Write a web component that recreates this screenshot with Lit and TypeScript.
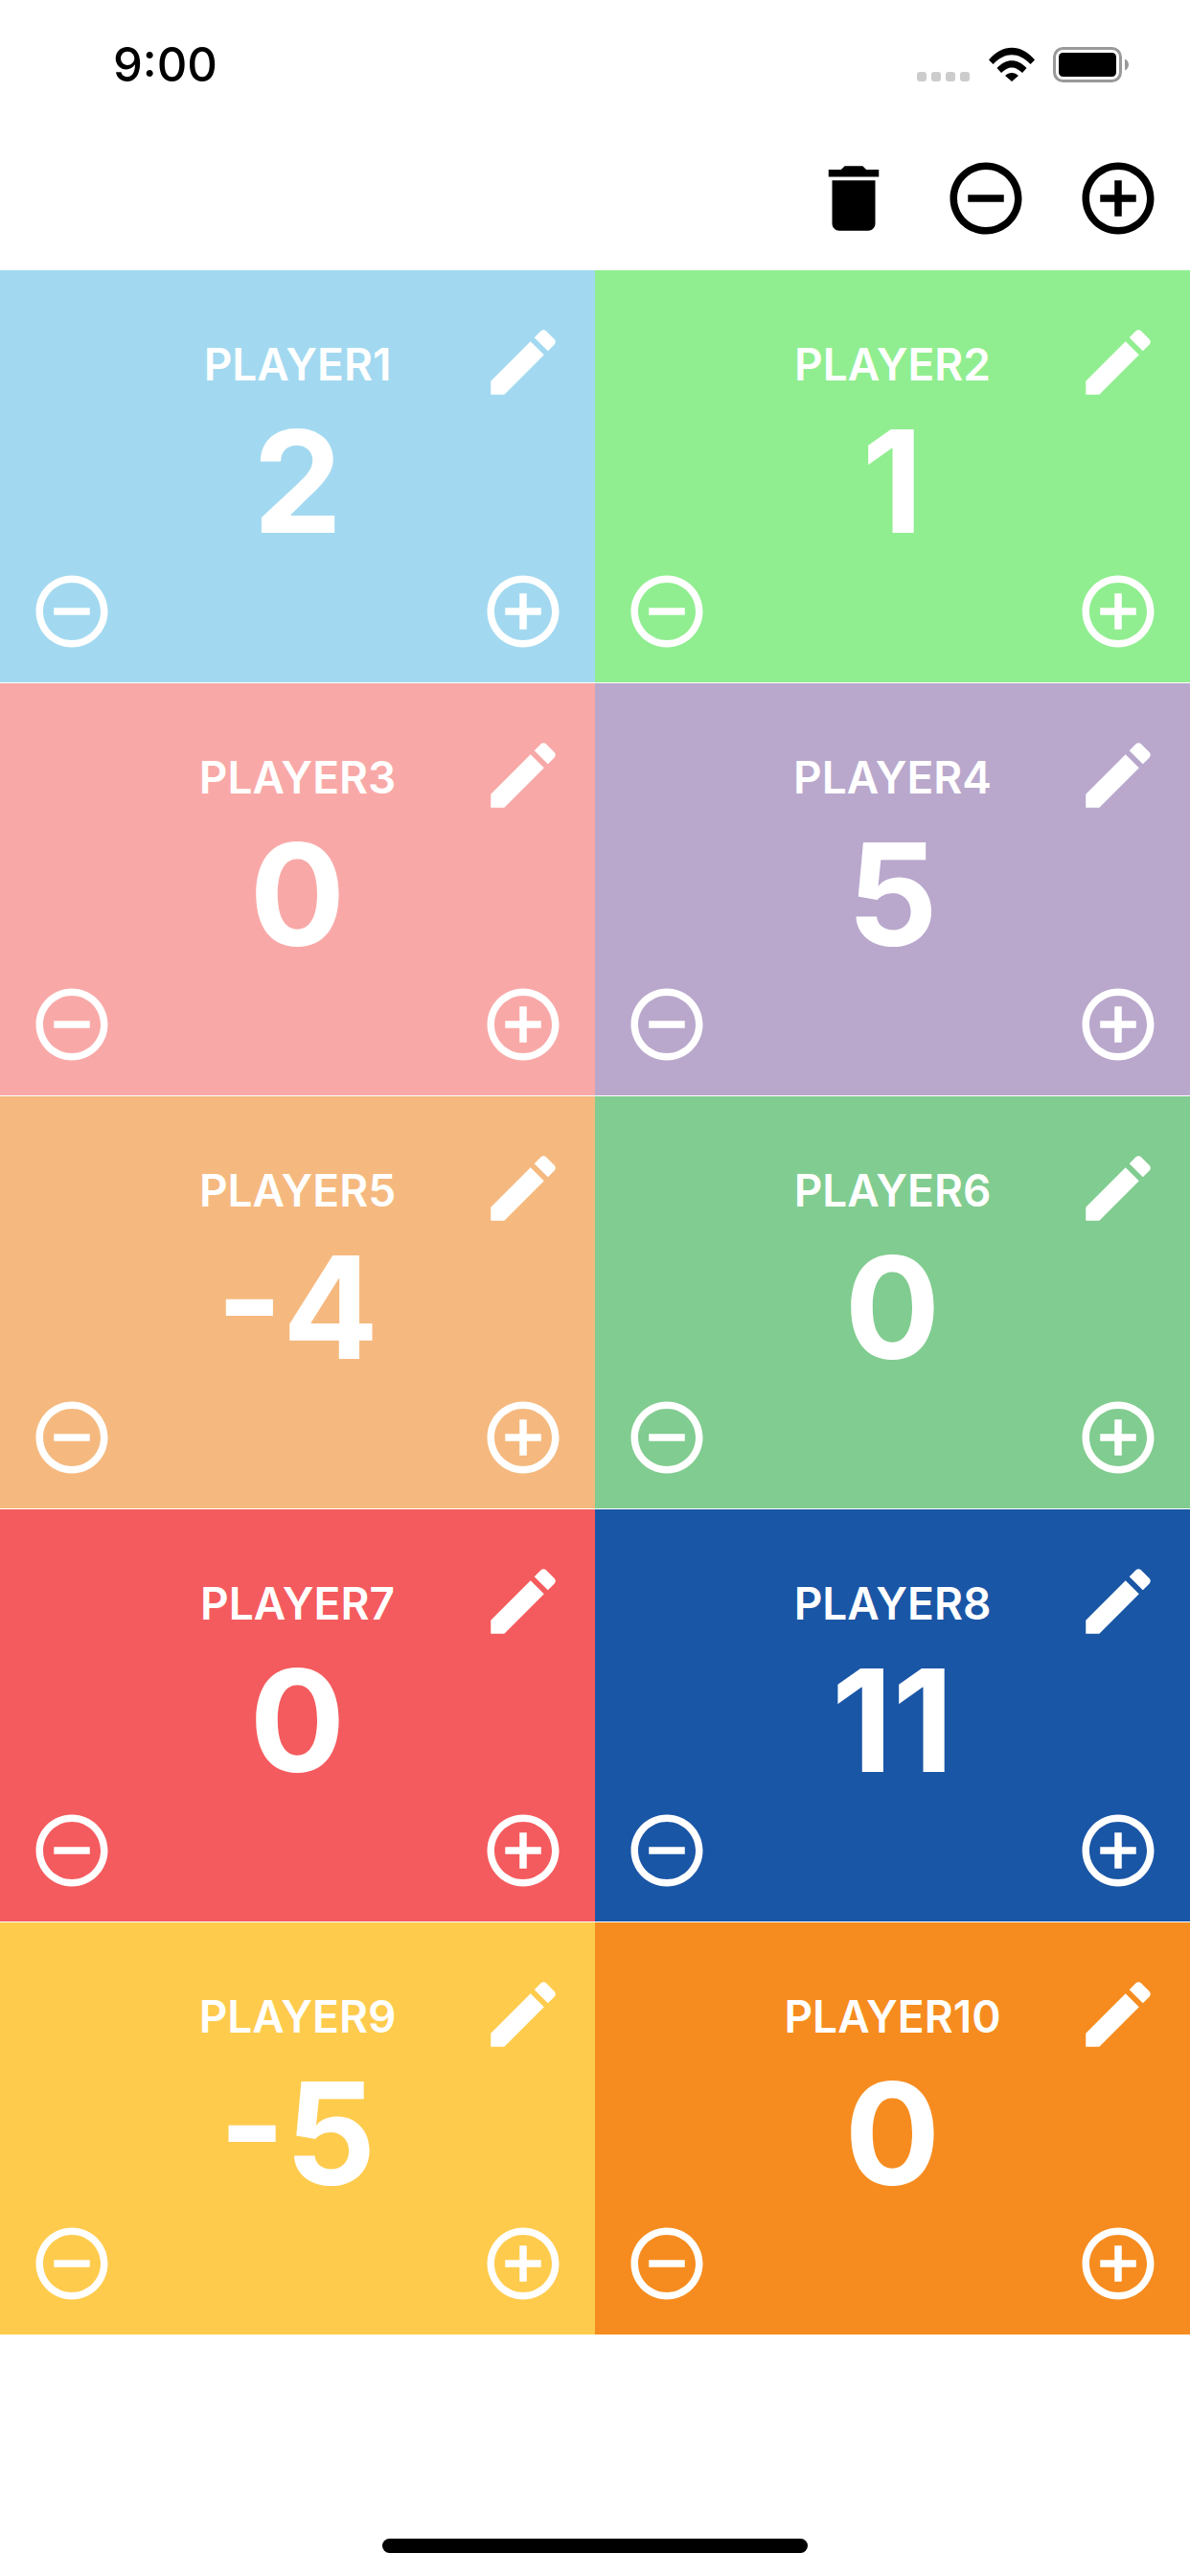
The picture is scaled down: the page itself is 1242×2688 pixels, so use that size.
import { LitElement, html, css, svg } from "lit";
import { customElement } from "lit/decorators.js";

const add = svg`<path d="M13 7h-2v4H7v2h4v4h2v-4h4v-2h-4V7zm-1-5C6.48 2 2 6.48 2 12s4.48 10 10 10 10-4.48 10-10S17.52 2 12 2zm0 18c-4.41 0-8-3.59-8-8s3.59-8 8-8 8 3.59 8 8-3.59 8-8 8z"/>`;
const minus = svg`<path d="M7 11v2h10v-2H7zm5-9C6.48 2 2 6.48 2 12s4.48 10 10 10 10-4.48 10-10S17.52 2 12 2zm0 18c-4.41 0-8-3.59-8-8s3.59-8 8-8 8 3.59 8 8-3.59 8-8 8z"/>`;
const edit = svg`<path d="M3 17.25V21h3.75L17.81 9.94l-3.75-3.75L3 17.25zM20.71 7.04c.39-.39.39-1.02 0-1.41l-2.34-2.34c-.39-.39-1.02-.39-1.41 0l-1.83 1.83 3.75 3.75 1.83-1.83z"/>`;
const trash = svg`<path d="M6 19c0 1.1.9 2 2 2h8c1.1 0 2-.9 2-2V7H6v12zM19 4h-3.5l-1-1h-5l-1 1H5v2h14V4z"/>`;
const icon = (p: unknown) => html`<svg class="icon" viewBox="0 0 24 24" fill="currentColor">${p}</svg>`;

const players: [string, string, string][] = [
  ["PLAYER1", "2", "#a2d9f0"],
  ["PLAYER2", "1", "#90ee90"],
  ["PLAYER3", "0", "#f8a9a7"],
  ["PLAYER4", "5", "#b9a8cc"],
  ["PLAYER5", "-4", "#f5b97f"],
  ["PLAYER6", "0", "#81cc90"],
  ["PLAYER7", "0", "#f45b5e"],
  ["PLAYER8", "11", "#1a56a6"],
  ["PLAYER9", "-5", "#fecb4d"],
  ["PLAYER10", "0", "#f68c1f"],
];

@customElement("app-root")
export class AppRoot extends LitElement {
  static styles = css`
    :host { display: block; width: 1242px; height: 2688px; background: #fff; overflow: hidden; font-family: Inter, "Liberation Sans", sans-serif; position: relative; }
    .icon { width: 90px; height: 90px; display: block; flex: none; }
    .status { height: 132px; display: flex; justify-content: space-between; box-sizing: border-box; }
    .time { font-size: 49px; font-weight: 500; line-height: 60px; padding: 38px 0 0 118px; color: #000; }
    .indicators { display: flex; align-items: flex-start; padding: 49px 64px 0 0; }
    .dots { display: flex; gap: 5px; margin: 26px 20px 0 0; }
    .dots i { width: 10px; height: 10px; border-radius: 3px; background: #ccc; display: block; }
    .wifi { width: 48px; height: 36px; display: block; margin-right: 19px; }
    .battery { width: 79px; height: 37px; display: block; }
    .toolbar { height: 150px; display: flex; justify-content: flex-end; gap: 48px; padding: 30px 30px 0 0; box-sizing: border-box; color: #000; }
    .grid { display: grid; grid-template-columns: 621px 621px; grid-auto-rows: 430px; row-gap: 1px; }
    .card { display: flex; flex-direction: column; color: #fff; box-sizing: border-box; padding: 0 30px 29px; }
    .top { height: 168px; display: grid; grid-template-columns: 90px 1fr 90px; }
    .name { grid-column: 1 / 4; grid-row: 1; justify-self: center; font-size: 46px; font-weight: 600; line-height: 56px; padding-top: 70px; }
    .edit { grid-column: 3; grid-row: 1; margin-top: 51px; }
    .score { text-align: center; font-size: 148px; font-weight: 700; line-height: 140px; margin-top: -17px; }
    .actions { margin-top: auto; display: flex; justify-content: space-between; }
    .home { position: absolute; left: 399px; top: 2649px; width: 444px; height: 15px; border-radius: 8px; background: #000; }
  `;

  render() {
    return html`
      <div class="status">
        <div class="time">9:00</div>
        <div class="indicators">
          <div class="dots"><i></i><i></i><i></i><i></i></div>
          <svg class="wifi" viewBox="0 0 48 36">
            <path d="M0 13.5 C14 -3.5 34 -3.5 48 13.5 L43.5 18 C31 5 17 5 4.5 18 Z M8.5 22 C18 11.5 30 11.5 39.5 22 L35 27 C27.5 19.5 20.5 19.5 13 27 Z M17 30 C21 26 27 26 31 30 L24 36 Z"/>
          </svg>
          <svg class="battery" viewBox="0 0 79 37">
            <rect x="1.5" y="1.5" width="69" height="34" rx="9" fill="none" stroke="#999" stroke-width="3"/>
            <rect x="6" y="6" width="60" height="25" rx="4.5"/>
            <path d="M75 12.5c2.500 1 4 3.500 4 6s-1.500 5-4 6z" fill="#999"/>
          </svg>
        </div>
      </div>
      <div class="toolbar">${icon(trash)}${icon(minus)}${icon(add)}</div>
      <div class="grid">
        ${players.map(
          ([n, s, c]) => html`<div class="card" style="background:${c}">
            <div class="top"><div class="name">${n}</div><div class="edit">${icon(edit)}</div></div>
            <div class="score">${s}</div>
            <div class="actions">${icon(minus)}${icon(add)}</div>
          </div>`
        )}
      </div>
      <div class="home"></div>
    `;
  }
}
